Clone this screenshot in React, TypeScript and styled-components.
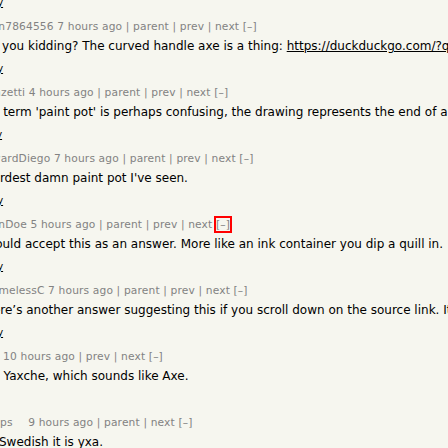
import React from "react";
import styled, { createGlobalStyle } from "styled-components";

const Global = createGlobalStyle`
  html, body { margin: 0; padding: 0; background: #f6f6ef; }
  body { width: 448px; height: 448px; overflow: hidden; }
`;

const Page = styled.div`
  width: 448px;
  height: 448px;
  overflow: hidden;
  background: #f6f6ef;
  font-family: "DejaVu Sans", Verdana, Geneva, sans-serif;
`;

/* The view is scrolled: the thread starts above and left of the window. */
const Thread = styled.div`
  display: flex;
  flex-direction: column;
  margin: -46px 0 0 -60px;
`;

const Row = styled.div`
  display: flex;
  align-items: flex-start;
  height: 66px;
`;

const Indent = styled.div<{ $w: number }>`
  flex: 0 0 ${(p) => p.$w}px;
`;

const VoteCell = styled.div`
  flex: 0 0 14px;
  display: flex;
  justify-content: center;
`;

const VoteArrow = styled.div`
  width: 0;
  height: 0;
  margin-top: 3px;
  border-left: 5px solid transparent;
  border-right: 5px solid transparent;
  border-bottom: 9px solid #9a9a9a;
`;

const Content = styled.div`
  display: flex;
  flex-direction: column;
  white-space: nowrap;
`;

const Comhead = styled.div`
  font-size: 10.667px;
  letter-spacing: 0.15px;
  line-height: 14px;
  height: 14px;
  color: #828282;
`;

const User = styled.span<{ $trail?: number }>`
  color: #828282;
  margin-right: ${(p) => p.$trail ?? 0}px;
`;

const HeadLink = styled.span`
  color: #828282;
`;

const Toggle = styled.span<{ $focus?: boolean }>`
  color: #828282;
  outline: ${(p) => (p.$focus ? "2px solid #ff0000" : "none")};
`;

const CommText = styled.div`
  margin-top: 5px;
  font-size: 12px;
  line-height: 14px;
  height: 14px;
  color: #000;
`;

const TextLink = styled.span`
  color: #000;
  text-decoration: underline;
`;

const Reply = styled.div`
  margin-top: 10px;
  font-size: 10px;
  line-height: 12px;
  height: 12px;
  color: #000;
  text-decoration: underline;
`;

type C = {
  indent: number;
  user: string;
  trail?: number;
  age: string;
  links: string[];
  focus?: boolean;
  text: React.ReactNode;
};

const comments: C[] = [
  {
    indent: 24,
    user: "someone",
    age: "8 hours ago",
    links: ["parent", "prev", "next"],
    text: "That looks like an axe to me.",
  },
  {
    indent: 24,
    user: "dean7864556",
    age: "7 hours ago",
    links: ["parent", "prev", "next"],
    text: (
      <>
        Are you kidding? The curved handle axe is a thing:{" "}
        <TextLink>https://duckduckgo.com/?q=curved+handle+axe&amp;ia=images</TextLink>
      </>
    ),
  },
  {
    indent: 23,
    user: "Belazetti",
    age: "4 hours ago",
    links: ["parent", "prev", "next"],
    text: "The term 'paint pot' is perhaps confusing, the drawing represents the end of a paintbrush.",
  },
  {
    indent: 24,
    user: "EdwardDiego",
    age: "7 hours ago",
    links: ["parent", "prev", "next"],
    text: "Weirdest damn paint pot I've seen.",
  },
  {
    indent: 24,
    user: "SeanDoe",
    age: "5 hours ago",
    links: ["parent", "prev", "next"],
    focus: true,
    text: "I would accept this as an answer. More like an ink container you dip a quill in.",
  },
  {
    indent: 24,
    user: "ShamelessC",
    age: "7 hours ago",
    links: ["parent", "prev", "next"],
    text: "There\u2019s another answer suggesting this if you scroll down on the source link. It is an axe.",
  },
  {
    indent: 6,
    user: "axeboy",
    age: "10 hours ago",
    links: ["prev", "next"],
    text: "Mayan Yaxche, which sounds like Axe.",
  },
  {
    indent: 30,
    user: "chips",
    trail: 12,
    age: "9 hours ago",
    links: ["parent", "next"],
    text: "In Swedish it is yxa.",
  },
];

function Comment({ c }: { c: C }) {
  return (
    <Row>
      <Indent $w={c.indent} />
      <VoteCell>
        <VoteArrow />
      </VoteCell>
      <Content>
        <Comhead>
          <User $trail={c.trail}>{c.user}</User> <span>{c.age}</span>
          {c.links.map((l) => (
            <React.Fragment key={l}>
              {" | "}
              <HeadLink>{l}</HeadLink>
            </React.Fragment>
          ))}{" "}
          <Toggle $focus={c.focus}>[–]</Toggle>
        </Comhead>
        <CommText>{c.text}</CommText>
        <Reply>reply</Reply>
      </Content>
    </Row>
  );
}

export default function App() {
  return (
    <Page>
      <Global />
      <Thread>
        {comments.map((c, i) => (
          <Comment key={i} c={c} />
        ))}
      </Thread>
    </Page>
  );
}
